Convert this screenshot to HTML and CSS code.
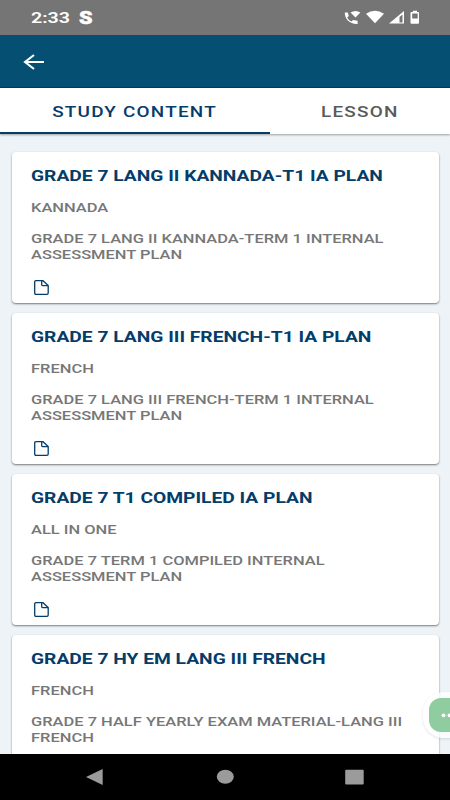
FILE: index.html
```
<!DOCTYPE html>
<html lang="en">
<head>
  <meta charset="utf-8">
  <title>Study Content</title>
  <link rel="stylesheet" href="styles.css">
</head>
<body>

  <div class="statusbar">
    <span class="clock">2:33</span>
    <span class="carrier">S</span>
    <svg class="status-icons" width="78" height="16" viewBox="0 0 78 16">
      <path d="M.8 2.600h3l1 3.400-1.600 1.500c1 2 2.300 3.200 4.200 4l1.700-1.500 4.500.8v3.200C6.500 14.600.500 9.500.8 2.600z" fill="#fff"/>
      <path d="M6.500 2.500Q11.500-.5 16.400 2.500L11.500 7.400z" fill="#fff"/>
      <path d="M22 3.800Q31-2.500 40 3.800L31 13.300z" fill="#fff"/>
      <path d="M45 13.500L60 1v12.500zM55.500 7v5.500h3V4.500z" fill="#fff" fill-rule="evenodd"/>
      <path d="M69 2V.8h4V2h1q1 0 1 1v9.800q0 1-1 1h-6.500q-1 0-1-1V3q0-1 1-1zM68.200 3.500v5h5.500v-5z" fill="#fff" fill-rule="evenodd"/>
    </svg>
  </div>

  <div class="appbar">
    <svg width="22" height="18" viewBox="0 0 22 18" fill="none" stroke="#fff" stroke-width="2.100">
      <path d="M21 9H2M11 2L2 9l9 7"/>
    </svg>
  </div>

  <div class="tabs">
    <div class="tab active"><span>STUDY CONTENT</span></div>
    <div class="tab"><span>LESSON</span></div>
  </div>

  <div class="content">
    <div class="card">
      <h2><span class="title">GRADE 7 LANG II KANNADA-T1 IA PLAN</span></h2>
      <p><span class="text">KANNADA</span></p>
      <p><span class="text">GRADE 7 LANG II KANNADA-TERM 1 INTERNAL<br>ASSESSMENT PLAN</span></p>
      <svg class="doc" width="15" height="15" viewBox="0 0 15 15"><path d="M2 .7h7L14.200 5.500V13q0 1.300-1.300 1.300H2Q.7 14.300.7 13V2Q.7.7 2 .7zM7.700.8v3.700q0 1.200 1.300 1.200h5"/></svg>
    </div>
    <div class="card">
      <h2><span class="title">GRADE 7 LANG III FRENCH-T1 IA PLAN</span></h2>
      <p><span class="text">FRENCH</span></p>
      <p><span class="text">GRADE 7 LANG III FRENCH-TERM 1 INTERNAL<br>ASSESSMENT PLAN</span></p>
      <svg class="doc" width="15" height="15" viewBox="0 0 15 15"><path d="M2 .7h7L14.200 5.500V13q0 1.300-1.300 1.300H2Q.7 14.300.7 13V2Q.7.7 2 .7zM7.700.8v3.700q0 1.200 1.300 1.200h5"/></svg>
    </div>
    <div class="card">
      <h2><span class="title">GRADE 7 T1 COMPILED IA PLAN</span></h2>
      <p><span class="text">ALL IN ONE</span></p>
      <p><span class="text">GRADE 7 TERM 1 COMPILED INTERNAL<br>ASSESSMENT PLAN</span></p>
      <svg class="doc" width="15" height="15" viewBox="0 0 15 15"><path d="M2 .7h7L14.200 5.500V13q0 1.300-1.300 1.300H2Q.7 14.300.7 13V2Q.7.7 2 .7zM7.700.8v3.700q0 1.200 1.300 1.200h5"/></svg>
    </div>
    <div class="card">
      <h2><span class="title">GRADE 7 HY EM LANG III FRENCH</span></h2>
      <p><span class="text">FRENCH</span></p>
      <p><span class="text">GRADE 7 HALF YEARLY EXAM MATERIAL-LANG III<br>FRENCH</span></p>
    </div>
    <div class="bubble">
      <svg width="34" height="34" viewBox="0 0 34 34">
        <rect width="44" height="34" rx="12" fill="#8fcca0"/>
        <circle cx="14.500" cy="17.300" r="1.900" fill="#fff"/>
        <circle cx="20.500" cy="17.300" r="1.900" fill="#fff"/>
      </svg>
    </div>
  </div>

  <div class="navbar">
    <svg width="450" height="46" viewBox="0 0 450 46" fill="#9b9b9b">
      <path d="M86 23L102.700 15v16z"/>
      <ellipse cx="225.300" cy="22.800" rx="8.500" ry="7"/>
      <rect x="345.200" y="15.800" width="18.500" height="14.700" rx="1"/>
    </svg>
  </div>

</body>
</html>
```
FILE: styles.css
```
html, body {
  height: 100%;
}
body {
  margin: 0;
  display: flex;
  flex-direction: column;
  overflow: hidden;
  background: #edf3f7;
  font-family: Roboto, "Liberation Sans", sans-serif;
}

.statusbar {
  flex: none;
  height: 35px;
  display: flex;
  align-items: center;
  padding: 0 28px 0 31px;
  background: #757575;
  color: #fff;
}
.clock {
  width: 48px;
  padding-top: 1px;
  font-size: 15.5px;
  font-weight: 600;
  transform: scaleX(1.27);
  transform-origin: left;
}
.carrier {
  font-size: 18px;
  font-weight: 900;
  -webkit-text-stroke: 0.5px #fff;
  transform: scaleX(1.2);
  transform-origin: left;
}
.status-icons {
  margin-left: auto;
}

.appbar {
  flex: none;
  box-sizing: border-box;
  height: 53px;
  display: flex;
  align-items: center;
  padding: 1px 0 0 23px;
  background: #054f72;
  border-bottom: 1px solid #023a60;
}

.tabs {
  flex: none;
  height: 46px;
  display: flex;
  background: #fff;
  box-shadow: 0 1px 2px rgba(0,0,0,0.35);
}
.tab {
  box-sizing: border-box;
  width: 180.5px;
  padding: 1px 0 0 1px;
  line-height: 46px;
  text-align: center;
  font-size: 15.5px;
  font-weight: 500;
  letter-spacing: 1px;
  color: #5a5a5a;
}
.tab span {
  display: inline-block;
  transform: scaleX(1.22);
}
.tab.active {
  width: 269.5px;
  padding-left: 0;
  color: #043c6a;
  border-bottom: 2px solid #043c6a;
}

.content {
  flex: 1;
  min-height: 0;
  position: relative;
  overflow: hidden;
  padding: 18px 11px 0 12px;
}
.card {
  box-sizing: border-box;
  height: 151px;
  margin-bottom: 10px;
  padding: 14px 19px 0;
  background: #fff;
  border-radius: 4px;
  box-shadow: 0 1px 2px rgba(0,0,0,0.5);
}
.card h2 {
  margin: 0 0 13px;
  font-size: 15.5px;
  line-height: 20px;
  font-weight: 700;
  color: #043c6a;
}
.card p {
  margin: 0 0 15px;
  font-size: 13.5px;
  line-height: 16px;
  font-weight: 500;
  color: #777;
}
.title, .text {
  display: inline-block;
  vertical-align: top;
  white-space: nowrap;
  transform: scaleX(1.24);
  transform-origin: left;
}
.text {
  transform: scaleX(1.22);
}
.doc {
  display: block;
  margin: 18px 0 0 3px;
  fill: none;
  stroke: #043c6a;
  stroke-width: 1.3;
}

.bubble {
  position: absolute;
  left: 423px;
  top: 558px;
  height: 34px;
  padding: 6px;
  border-radius: 21px 0 0 21px;
  background: rgba(255,255,255,0.75);
  box-shadow: 0 1px 3px rgba(0,0,0,0.12);
}

.navbar {
  flex: none;
  height: 46px;
  background: #000;
}
```
